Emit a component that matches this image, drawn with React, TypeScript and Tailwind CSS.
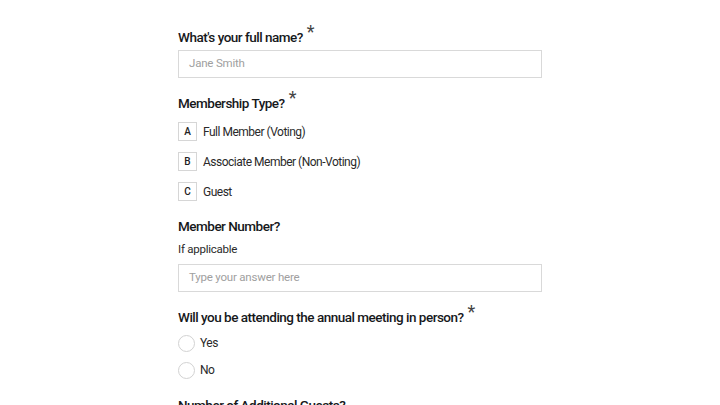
const font = "font-['Roboto',sans-serif]";

function Label({ text, required }: { text: string; required?: boolean }) {
  return (
    <div className="flex items-start whitespace-nowrap text-[13.5px] font-medium leading-[20px] tracking-[-0.5px] text-[#16181b]">
      <span>{text}</span>
      {required && <span className="ml-[4px] -mt-[5px] text-[18px] font-normal leading-[20px] text-[#444]">*</span>}
    </div>
  );
}

function TextInput({ placeholder }: { placeholder: string }) {
  return (
    <div className="flex h-[28px] w-full items-center border border-[#d9d9d9] px-[10px] text-[11.5px] tracking-[-0.2px] text-[#a0a0a0]">
      {placeholder}
    </div>
  );
}

function Choice({ letter, text }: { letter: string; text: string }) {
  return (
    <div className="flex h-[19px] items-center gap-[6px]">
      <div className="flex h-[19px] w-[19px] items-center justify-center border border-[#d6d6d6] text-[10px] font-medium text-[#222]">
        {letter}
      </div>
      <span className="text-[12px] tracking-[-0.5px] text-[#2a2a2a]">{text}</span>
    </div>
  );
}

function Radio({ text }: { text: string }) {
  return (
    <div className="flex h-[18px] items-center gap-[5px]">
      <div className="h-[17px] w-[17px] rounded-full border border-[#d2d2d2]" />
      <span className="text-[12px] tracking-[-0.5px] text-[#2a2a2a]">{text}</span>
    </div>
  );
}

export default function App() {
  return (
    <div className={`h-[405px] w-[720px] overflow-hidden bg-white ${font}`}>
      <div className="mx-auto flex w-[364px] flex-col pt-[27px]">
        <Label text="What's your full name?" required />
        <div className="mt-[3px]">
          <TextInput placeholder="Jane Smith" />
        </div>

        <div className="mt-[15px]">
          <Label text="Membership Type?" required />
        </div>
        <div className="mt-[9px] flex flex-col gap-[11px]">
          <Choice letter="A" text="Full Member (Voting)" />
          <Choice letter="B" text="Associate Member (Non-Voting)" />
          <Choice letter="C" text="Guest" />
        </div>

        <div className="mt-[15px]">
          <Label text="Member Number?" />
        </div>
        <div className="mt-[4px] text-[11.5px] leading-[18px] tracking-[-0.25px] text-[#2a2a2a]">If applicable</div>
        <div className="mt-[6px]">
          <TextInput placeholder="Type your answer here" />
        </div>

        <div className="mt-[15px]">
          <Label text="Will you be attending the annual meeting in person?" required />
        </div>
        <div className="mt-[7px] flex flex-col gap-[9px]">
          <Radio text="Yes" />
          <Radio text="No" />
        </div>

        <div className="mt-[16px]">
          <Label text="Number of Additional Guests?" />
        </div>
      </div>
    </div>
  );
}
